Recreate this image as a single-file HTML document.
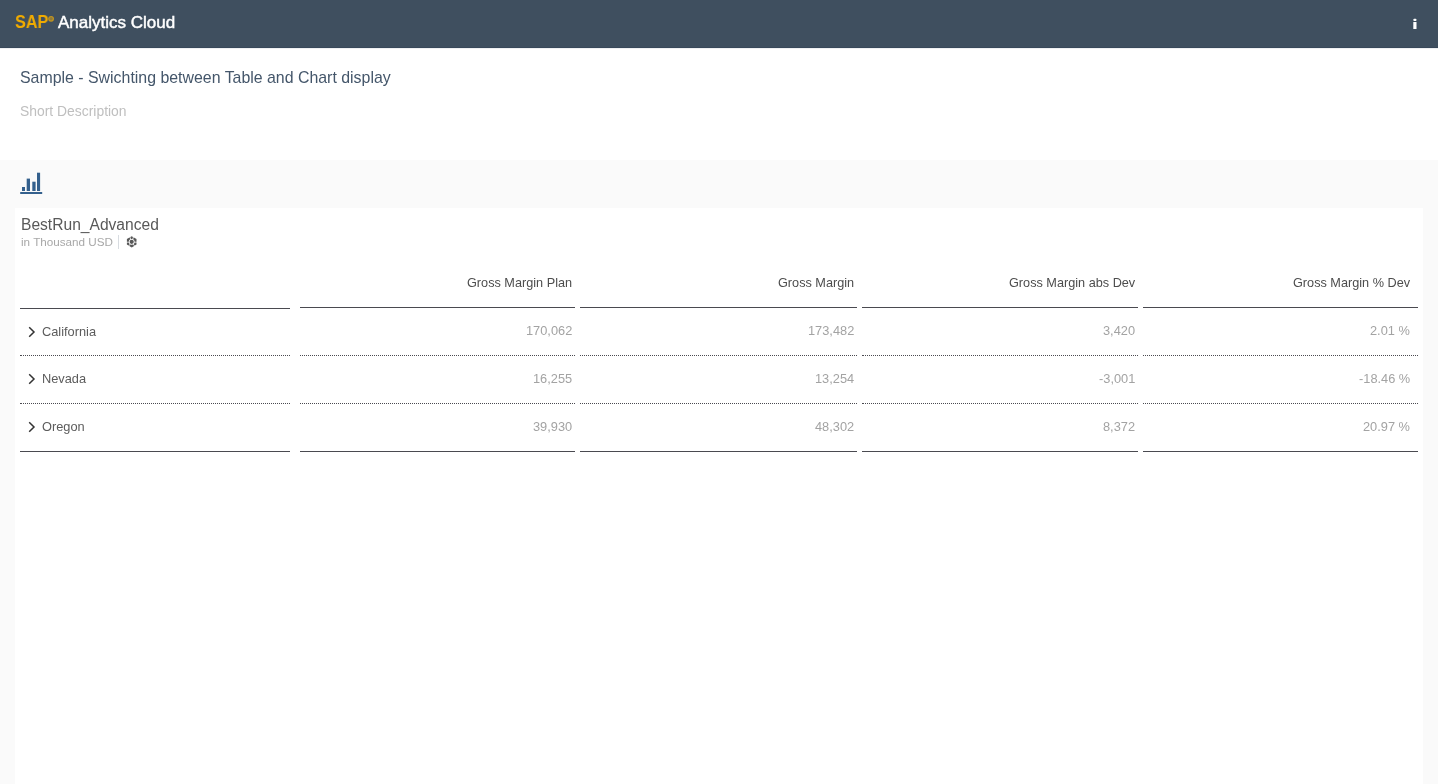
<!DOCTYPE html>
<html><head><meta charset="utf-8">
<style>
*{margin:0;padding:0;box-sizing:border-box}
html,body{width:1438px;height:784px;overflow:hidden;background:#fff;font-family:"Liberation Sans",sans-serif}
.abs{position:absolute;white-space:nowrap}
#hdr{position:absolute;left:0;top:0;width:1438px;height:47px;background:#3f4f5f}
#hdrline{position:absolute;left:0;top:47px;width:1438px;height:1px;background:#38485a}
#hdrsh{position:absolute;left:0;top:48px;width:1438px;height:1px;background:#eef0f2}
#gray{position:absolute;left:0;top:160px;width:1438px;height:624px;background:#fafafa}
#card{position:absolute;left:15px;top:208px;width:1408px;height:576px;background:#fff}
.hline{position:absolute;height:1px;background:#4a4a50}
.dline{position:absolute;height:1px;border-top:1px dotted #4a4a50}
.th{position:absolute;top:275.2px;font-size:12.7px;line-height:16px;color:#4d4d4d;white-space:nowrap}
.td{position:absolute;font-size:12.8px;line-height:16px;color:#a3a3a3;white-space:nowrap}
.rl{position:absolute;left:41.9px;font-size:12.8px;line-height:16px;color:#5c5c5c;white-space:nowrap}
.chev{position:absolute;left:28px}
.abs,.th,.td,.rl{will-change:transform}
</style></head><body>
<div id="hdr"></div><div id="hdrline"></div><div id="hdrsh"></div>
<div class="abs" style="left:14.5px;top:12.3px;font-size:18px;font-weight:bold;color:#f0ab00;line-height:20px;transform:scaleX(0.90);transform-origin:0 0">SAP</div>
<svg class="abs" style="left:47px;top:15px" width="9" height="9" viewBox="0 0 9 9"><circle cx="4.1" cy="3.8" r="2.9" fill="#c3951e"/><circle cx="4.1" cy="3.8" r="1.7" fill="#8f7a3a"/></svg>
<div class="abs" style="left:58px;top:13.3px;font-size:17px;color:#fff;line-height:19px;-webkit-text-stroke:0.45px #fff">Analytics Cloud</div>
<svg class="abs" style="left:1410px;top:16px" width="10" height="16" viewBox="0 0 10 16"><rect x="3.3" y="2.7" width="3.2" height="2.3" rx="1" fill="#fff"/><rect x="3.3" y="6" width="3.2" height="7" fill="#fff"/></svg>

<div class="abs" style="left:20px;top:69.1px;font-size:15.9px;color:#44566a;line-height:18px">Sample - Swichting between Table and Chart display</div>
<div class="abs" style="left:20px;top:102.7px;font-size:13.9px;color:#bfbfbf;line-height:16px">Short Description</div>

<div id="gray"></div>
<svg class="abs" style="left:18px;top:168px" width="28" height="30" viewBox="0 0 28 30">
<g fill="#34608d"><rect x="4" y="19" width="3" height="4"/><rect x="8.7" y="10.6" width="3.3" height="12.4"/><rect x="14.3" y="13.7" width="3.3" height="9.3"/><rect x="19" y="4.7" width="3.1" height="18.3"/><rect x="2.2" y="24" width="22" height="2"/></g></svg>
<div id="card"></div>

<div class="abs" style="left:21px;top:216.2px;font-size:15.6px;color:#595959;line-height:18px">BestRun_Advanced</div>
<div class="abs" style="left:21px;top:235px;font-size:11.7px;color:#a8a8a8;line-height:14px">in Thousand USD</div>
<div class="abs" style="left:118px;top:235px;width:1px;height:14px;background:#d8dce1"></div>
<svg class="abs" style="left:125px;top:235px" width="14" height="14" viewBox="0 0 14 14">
<polygon points="6.7,1.2 11.5,4 11.5,9.6 6.7,12.4 1.9,9.6 1.9,4" fill="#585858"/>
<g stroke="#fff" stroke-width="0.75"><line x1="6.7" y1="7.2" x2="13" y2="7.2"/><line x1="6.7" y1="7.2" x2="0.4" y2="7.2"/><line x1="6.7" y1="6.8" x2="9.2" y2="0.2"/><line x1="6.7" y1="6.8" x2="4.2" y2="0.2"/><line x1="6.7" y1="6.8" x2="10.7" y2="12.6"/><line x1="6.7" y1="6.8" x2="2.7" y2="12.6"/></g>
<circle cx="6.7" cy="6.8" r="2.9" fill="#fff"/><circle cx="6.7" cy="6.8" r="2.1" fill="#585858"/></svg>

<div class="th" style="right:866.0px">Gross Margin Plan</div>
<div class="th" style="right:584.2px">Gross Margin</div>
<div class="th" style="right:302.7px">Gross Margin abs Dev</div>
<div class="th" style="right:27.8px">Gross Margin % Dev</div>
<div class="hline" style="left:20px;top:308px;width:270px"></div>
<div class="hline" style="left:300px;top:307px;width:275px"></div>
<div class="hline" style="left:580px;top:307px;width:277px"></div>
<div class="hline" style="left:862px;top:307px;width:276px"></div>
<div class="hline" style="left:1143px;top:307px;width:275px"></div>
<svg class="chev" style="top:326px" width="8" height="12" viewBox="0 0 8 12"><polyline points="1.2,1.3 6,6 1.2,10.7" fill="none" stroke="#333" stroke-width="1.5"/></svg>
<div class="rl" style="top:323.5px">California</div>
<div class="td" style="right:866.0px;top:323.0px">170,062</div>
<div class="td" style="right:584.2px;top:323.0px">173,482</div>
<div class="td" style="right:302.7px;top:323.0px">3,420</div>
<div class="td" style="right:27.8px;top:323.0px">2.01 %</div>
<div class="dline" style="left:20px;top:355px;width:270px"></div>
<div class="dline" style="left:300px;top:355px;width:275px"></div>
<div class="dline" style="left:580px;top:355px;width:277px"></div>
<div class="dline" style="left:862px;top:355px;width:276px"></div>
<div class="dline" style="left:1143px;top:355px;width:275px"></div>
<svg class="chev" style="top:373px" width="8" height="12" viewBox="0 0 8 12"><polyline points="1.2,1.3 6,6 1.2,10.7" fill="none" stroke="#333" stroke-width="1.5"/></svg>
<div class="rl" style="top:370.5px">Nevada</div>
<div class="td" style="right:866.0px;top:371.0px">16,255</div>
<div class="td" style="right:584.2px;top:371.0px">13,254</div>
<div class="td" style="right:302.7px;top:371.0px">-3,001</div>
<div class="td" style="right:27.8px;top:371.0px">-18.46 %</div>
<div class="dline" style="left:20px;top:403px;width:270px"></div>
<div class="dline" style="left:300px;top:403px;width:275px"></div>
<div class="dline" style="left:580px;top:403px;width:277px"></div>
<div class="dline" style="left:862px;top:403px;width:276px"></div>
<div class="dline" style="left:1143px;top:403px;width:275px"></div>
<svg class="chev" style="top:421px" width="8" height="12" viewBox="0 0 8 12"><polyline points="1.2,1.3 6,6 1.2,10.7" fill="none" stroke="#333" stroke-width="1.5"/></svg>
<div class="rl" style="top:418.5px">Oregon</div>
<div class="td" style="right:866.0px;top:419.0px">39,930</div>
<div class="td" style="right:584.2px;top:419.0px">48,302</div>
<div class="td" style="right:302.7px;top:419.0px">8,372</div>
<div class="td" style="right:27.8px;top:419.0px">20.97 %</div>
<div class="hline" style="left:20px;top:451px;width:270px"></div>
<div class="hline" style="left:300px;top:451px;width:275px"></div>
<div class="hline" style="left:580px;top:451px;width:277px"></div>
<div class="hline" style="left:862px;top:451px;width:276px"></div>
<div class="hline" style="left:1143px;top:451px;width:275px"></div>
</body></html>
